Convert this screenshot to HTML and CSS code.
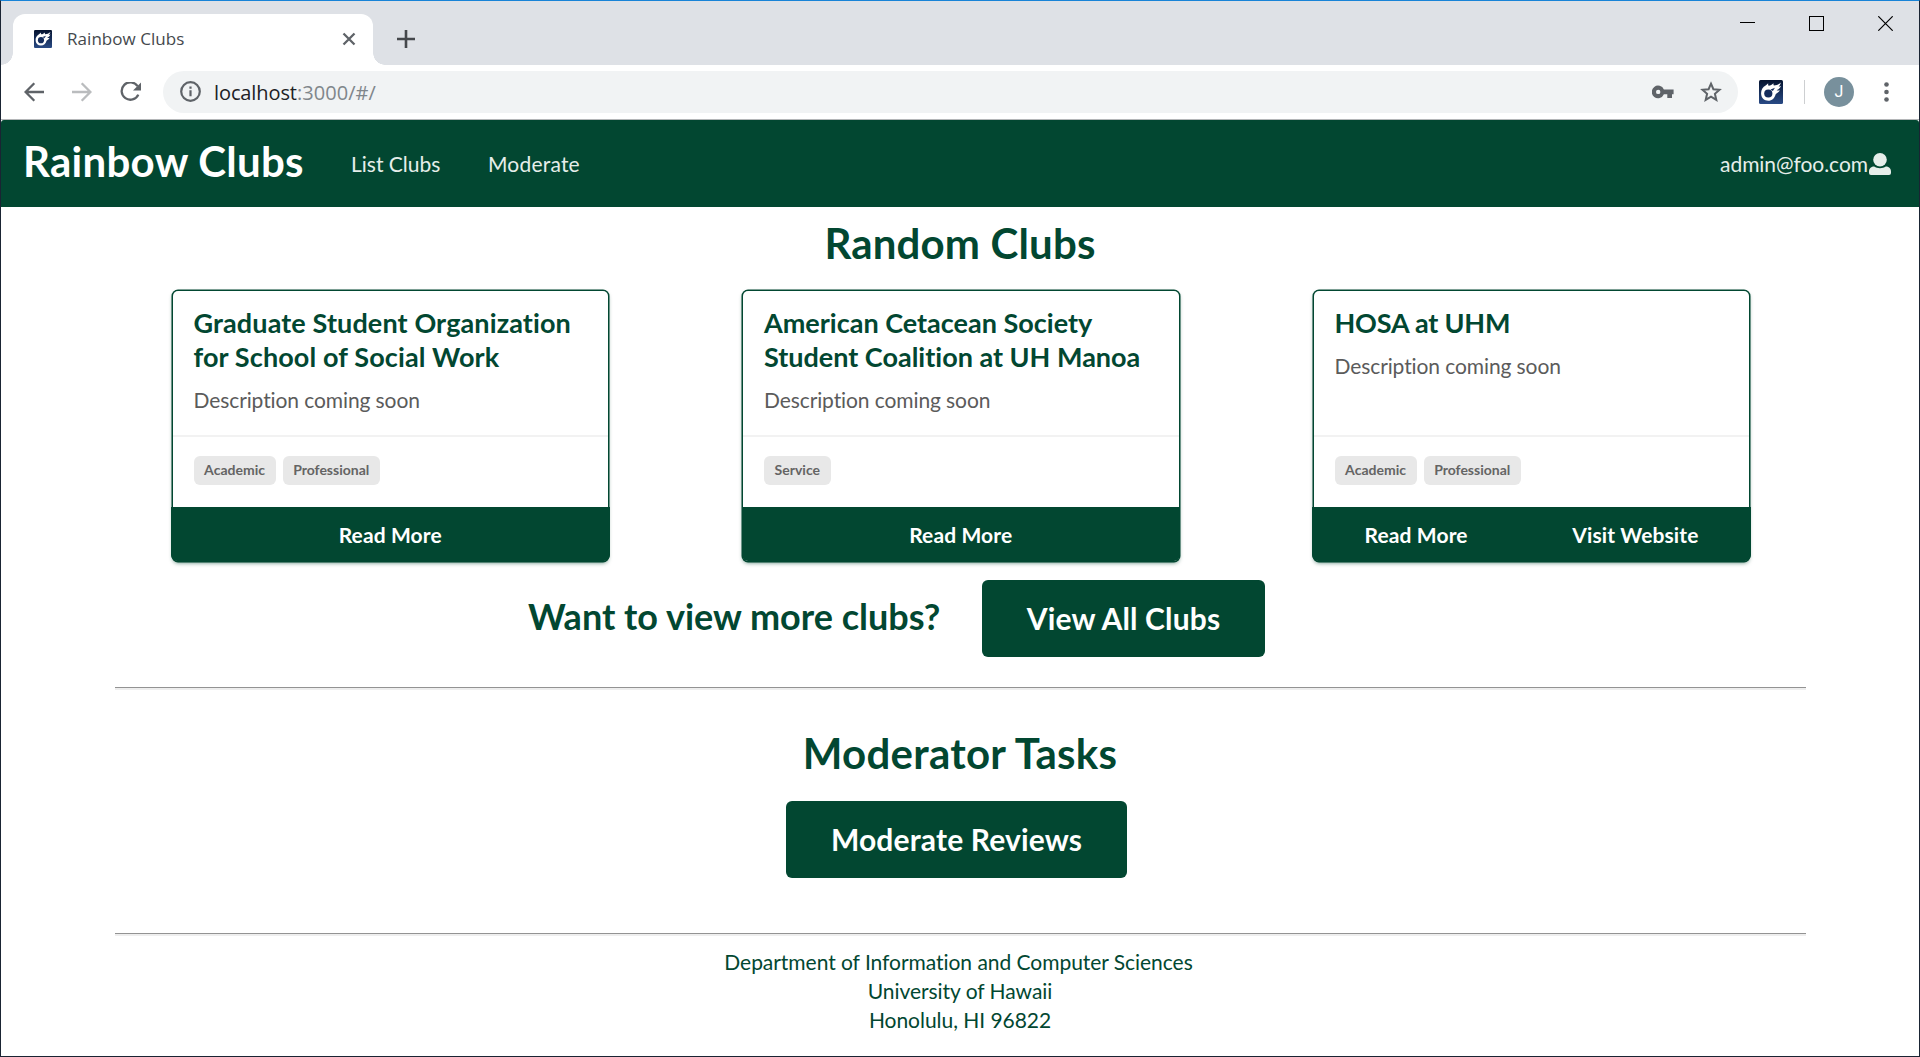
FILE: index.html
```html
<!DOCTYPE html>
<html lang="en">
<head>
<meta charset="utf-8">
<title>Rainbow Clubs</title>
<link rel="stylesheet" href="styles.css">
</head>
<body>
<svg width="0" height="0" class="defs" aria-hidden="true">
  <defs>
    <linearGradient id="navy" x1="0" y1="0" x2="0" y2="1"><stop offset="0" stop-color="#05132f"/><stop offset="1" stop-color="#294a85"/></linearGradient>
    <symbol id="comet" viewBox="0 0 24 24">
      <rect width="24" height="24" rx="1.5" fill="url(#navy)"/>
      <path d="M2.200 14.500C1.600 10.500 3.600 7.400 6.600 5.600C7.600 5 8.200 4 9.200 3.300C9 4.500 9.200 5.200 9.700 5.800C11.500 5.400 13 4.900 14.400 3.200C14.400 4.300 14.500 5 14.900 5.600C17.200 5.300 19.600 4.700 21.800 2.500C21.400 4.500 20.600 5.600 19.600 6.500C20.400 6.700 21.200 6.500 22 6.100C21.200 8.300 19.400 9.500 17.600 10.300C18.800 10.700 20 10.600 21 10.200C19.500 12.600 17.500 13.300 16.700 14.200C15.800 18 13 20.700 9.200 20.700C5.400 20.700 2.500 18 2.200 14.500Z" fill="#fff"/>
      <circle cx="9.300" cy="13.500" r="4.100" fill="#142c5c"/>
      <path d="M11.500 9.400L16 7.800L13.800 10.900Z" fill="#142c5c"/>
    </symbol>
  </defs>
</svg>
<div class="window">
  <div class="tabstrip">
    <div class="tab">
      <svg class="favicon" width="18" height="18"><use href="#comet"/></svg>
      <span class="tab-title">Rainbow Clubs</span>
      <svg class="tab-close" width="14" height="14" viewBox="0 0 14 14"><path d="M1.500 1.500L12.500 12.500M12.500 1.500L1.500 12.500" stroke="#5f6368" stroke-width="2.300"/></svg>
    </div>
    <svg class="new-tab" width="18" height="18" viewBox="0 0 18 18"><path d="M9 0V18M0 9H18" stroke="#45484c" stroke-width="2.600"/></svg>
    <div class="controls">
      <svg width="15" height="16" viewBox="0 0 15 16"><path d="M0 6.500H15" stroke="#000"/></svg>
      <svg width="15" height="15" viewBox="0 0 15 15"><rect x=".5" y=".5" width="14" height="14" fill="none" stroke="#000"/></svg>
      <svg width="15" height="15" viewBox="0 0 15 15"><path d="M.3 .3L14.700 14.700M14.700 .3L.3 14.700" stroke="#000" stroke-width="1.200"/></svg>
    </div>
  </div>
  <div class="toolbar">
    <svg width="20" height="20" viewBox="0 0 20 20" fill="none" stroke="#5f6368" stroke-width="2.300"><path d="M20 10H2M10.300 1.200L1.600 10L10.300 18.800"/></svg>
    <svg width="20" height="20" viewBox="0 0 20 20" fill="none" stroke="#babcbe" stroke-width="2.300"><path d="M0 10H18M9.700 1.200L18.400 10L9.700 18.800"/></svg>
    <svg width="21" height="20" viewBox="0 0 21 20"><path d="M17.600 4.200A8.700 8.700 0 1 0 18.300 12.600" fill="none" stroke="#5f6368" stroke-width="2.300"/><path d="M21 .5V8.500H13Z" fill="#5f6368"/></svg>
    <div class="omnibox">
      <svg width="21" height="21" viewBox="0 0 21 21"><circle cx="10.500" cy="10.500" r="9.300" fill="none" stroke="#5f6368" stroke-width="2.200"/><path d="M9.400 9.300h2.200v6H9.400zM9.400 5.500h2.200v2.200H9.400z" fill="#5f6368"/></svg>
      <span class="url"><span class="host">localhost</span>:3000/#/</span>
      <svg class="key" width="22" height="14" viewBox="0 0 22 14"><path fill-rule="evenodd" d="M11.900 4.500A6.300 6.300 0 1 0 11.900 9.300H15.300V13H20V9.300H21.600V4.500ZM6.200 9.100A2.200 2.200 0 1 1 6.200 4.700A2.200 2.200 0 0 1 6.200 9.100Z" fill="#5f6368"/></svg>
      <svg class="star" width="22" height="22" viewBox="0 0 22 22"><path d="M11 2.700L13.400 8.200L19.500 8.800L14.900 12.800L16.300 18.800L11 15.600L5.700 18.800L7.100 12.800L2.500 8.800L8.600 8.200Z" fill="none" stroke="#5f6368" stroke-width="2"/></svg>
    </div>
    <svg class="extension" width="24" height="24"><use href="#comet"/></svg>
    <span class="separator"></span>
    <span class="avatar">J</span>
    <svg class="dots" width="5" height="20" viewBox="0 0 5 20" fill="#5f6368"><circle cx="2.500" cy="2.500" r="2.300"/><circle cx="2.500" cy="10" r="2.300"/><circle cx="2.500" cy="17.500" r="2.300"/></svg>
  </div>
  <nav class="navbar">
    <span class="brand">Rainbow Clubs</span>
    <span class="nav-item list">List Clubs</span>
    <span class="nav-item moderate">Moderate</span>
    <span class="nav-item account">admin@foo.com</span>
    <svg class="user" width="22" height="22" viewBox="0 0 22 22" fill="#e6eeea"><circle cx="11" cy="6.800" r="6.800"/><path d="M0 20V18.500C0 15.500 2.500 13.600 5.200 13.600C6.800 14.700 8.800 15.300 11 15.300S15.200 14.700 16.800 13.600C19.500 13.600 22 15.500 22 18.500V20Q22 22 20 22H2Q0 22 0 20Z"/></svg>
  </nav>
  <main>
    <h1 class="title">Random Clubs</h1>
    <div class="cards">
      <article class="card">
        <div class="content"><h2 class="wide">Graduate Student Organization for School of Social Work</h2><p>Description coming soon</p></div>
        <div class="tags"><span>Academic</span><span>Professional</span></div>
        <div class="actions"><span>Read More</span></div>
      </article>
      <article class="card">
        <div class="content"><h2>American Cetacean Society Student Coalition at UH Manoa</h2><p>Description coming soon</p></div>
        <div class="tags"><span>Service</span></div>
        <div class="actions"><span>Read More</span></div>
      </article>
      <article class="card">
        <div class="content"><h2 class="tight">HOSA at UHM</h2><p>Description coming soon</p></div>
        <div class="tags"><span>Academic</span><span>Professional</span></div>
        <div class="actions two"><span>Read More</span><span>Visit Website</span></div>
      </article>
    </div>
    <div class="more">
      <h2>Want to view more clubs?</h2>
      <span class="button">View All Clubs</span>
    </div>
    <hr>
    <h1 class="title tasks">Moderator Tasks</h1>
    <span class="button reviews">Moderate Reviews</span>
    <hr class="footer-rule">
  </main>
  <footer><div class="dept">Department of Information and Computer Sciences</div><div>University of Hawaii</div><div>Honolulu, HI 96822</div></footer>
</div>
</body>
</html>
```
FILE: styles.css
```css
* { box-sizing: border-box; }
body { margin: 0; font-family: Lato, "Liberation Sans", sans-serif; font-size: 21px; font-variant-ligatures: none; overflow: hidden; }
h1, h2, p { margin: 0; }
svg { display: block; flex: none; }
.defs { position: absolute; }
.window { width: 1920px; height: 1057px; border: 1px solid #1a2433; border-top-color: #1883d7; background: #fff; }

.tabstrip { height: 64px; background: #dee1e6; display: flex; padding: 13px 26px 0 12px; }
.tab { position: relative; width: 360px; background: #fff; border-radius: 12px 12px 0 0; display: flex; align-items: center; padding: 0 17px 1px 21px; }
.tab::before, .tab::after { content: ""; position: absolute; bottom: 0; width: 12px; height: 12px; }
.tab::before { left: -12px; background: radial-gradient(circle at 0 0, transparent 11.5px, #fff 12px); }
.tab::after { right: -12px; background: radial-gradient(circle at 100% 0, transparent 11.5px, #fff 12px); }
.tab-title { margin-left: 15px; font: 17px/24px "Open Sans", sans-serif; color: #45494d; letter-spacing: .05px; }
.tab-close { margin-left: auto; }
.new-tab { margin: 16px 0 0 24px; }
.controls { margin: 2px 0 0 auto; display: flex; gap: 54px; }

.toolbar { height: 55px; border-bottom: 1px solid #b4b6b8; display: flex; align-items: center; padding: 0 30px 1px 23px; }
.toolbar > svg:nth-child(2) { margin-left: 28px; }
.toolbar > svg:nth-child(3) { margin-left: 28px; }
.omnibox { width: 1575px; height: 42px; border-radius: 21px; background: #f1f3f4; margin-left: 22px; display: flex; align-items: center; padding: 0 16px 0 17px; }
.url { margin: 2px 0 0 13px; font: 20px/28px "Open Sans", sans-serif; letter-spacing: .05px; color: #80868b; }
.host { color: #202124; letter-spacing: -.1px; }
.key { margin-left: auto; }
.star { margin-left: 26px; }
.extension { margin-left: 21px; }
.separator { width: 1px; height: 24px; background: #cdcfd1; margin-left: 21px; }
.avatar { width: 30px; height: 30px; border-radius: 50%; background: #78909c; color: #fff; font: 16px/30px Roboto, sans-serif; text-align: center; margin-left: 19px; }
.dots { margin-left: auto; }

.navbar { height: 87px; background: #024731; border-radius: 3px 3px 0 0; display: flex; align-items: center; padding: 0 28px 0 22px; color: #fff; }
.brand { font-size: 42px; line-height: 54px; font-weight: 700; letter-spacing: .28px; padding-bottom: 6px; width: 328px; }
.nav-item { color: #e6eeea; line-height: 30px; }
.list { width: 137px; }
.moderate { letter-spacing: .2px; }
.account { margin-left: auto; letter-spacing: -.05px; }
.user { margin-left: 1px; }

main { color: #024731; display: flex; flex-direction: column; }
.title { font-size: 42px; line-height: 54px; font-weight: 700; letter-spacing: .15px; text-align: center; margin-top: 9px; }
.cards { margin: 20.500px 0 0 104px; display: grid; grid-template-columns: repeat(3, 570.5px); justify-items: center; }
.card { width: 435.500px; height: 270.500px; border-radius: 5px; box-shadow: 0 0 0 1.5px #024731, 0 2px 4px rgba(2, 71, 49, .6); display: flex; flex-direction: column; background: #fff; }
.content { height: 144px; padding: 15.500px 21px 0; }
.content h2 { font-size: 27px; line-height: 34px; font-weight: 700; }
.content .wide { letter-spacing: .12px; }
.content .tight { letter-spacing: -.2px; }
.content p { margin-top: 11px; line-height: 30px; color: #5b5b5b; letter-spacing: -.1px; }
.tags { height: 72.500px; border-top: 2px solid #f2f2f2; padding: 19.500px 21px 0; display: flex; gap: 7px; }
.tags span { height: 29px; padding: 0 10.6px; border-radius: 6px; background: #e8e8e8; color: #646464; font-size: 14px; line-height: 28px; font-weight: 700; }
.actions { margin: 0 -1.5px; height: 54px; background: #024731; border-radius: 0 0 6px 6px; display: flex; color: #fff; }
.actions span { flex: 1 1 0; text-align: center; font-weight: 700; line-height: 55px; letter-spacing: .12px; }
.two span { padding-right: 11px; }

.more { display: flex; align-items: center; margin: 19px 0 0 527px; }
.more h2 { font-size: 36px; line-height: 46px; font-weight: 700; padding-bottom: 5px; width: 454px; }
.button { height: 77px; width: 283px; border-radius: 6px; background: #024731; color: #fff; font-size: 30px; line-height: 77px; font-weight: 700; text-align: center; letter-spacing: .15px; }
hr { width: 1691px; height: 3px; margin: 30px 0 0 114px; border: 0; border-top: 1px solid #939393; background: #eee; }
.tasks { margin-top: 36px; letter-spacing: .28px; }
.reviews { width: 341px; margin: 21px 0 0 785px; }
.footer-rule { margin-top: 55px; }
footer { margin-top: 11px; text-align: center; line-height: 29px; color: #024731; letter-spacing: -.04px; }
.dept { padding-right: 3px; }
```
